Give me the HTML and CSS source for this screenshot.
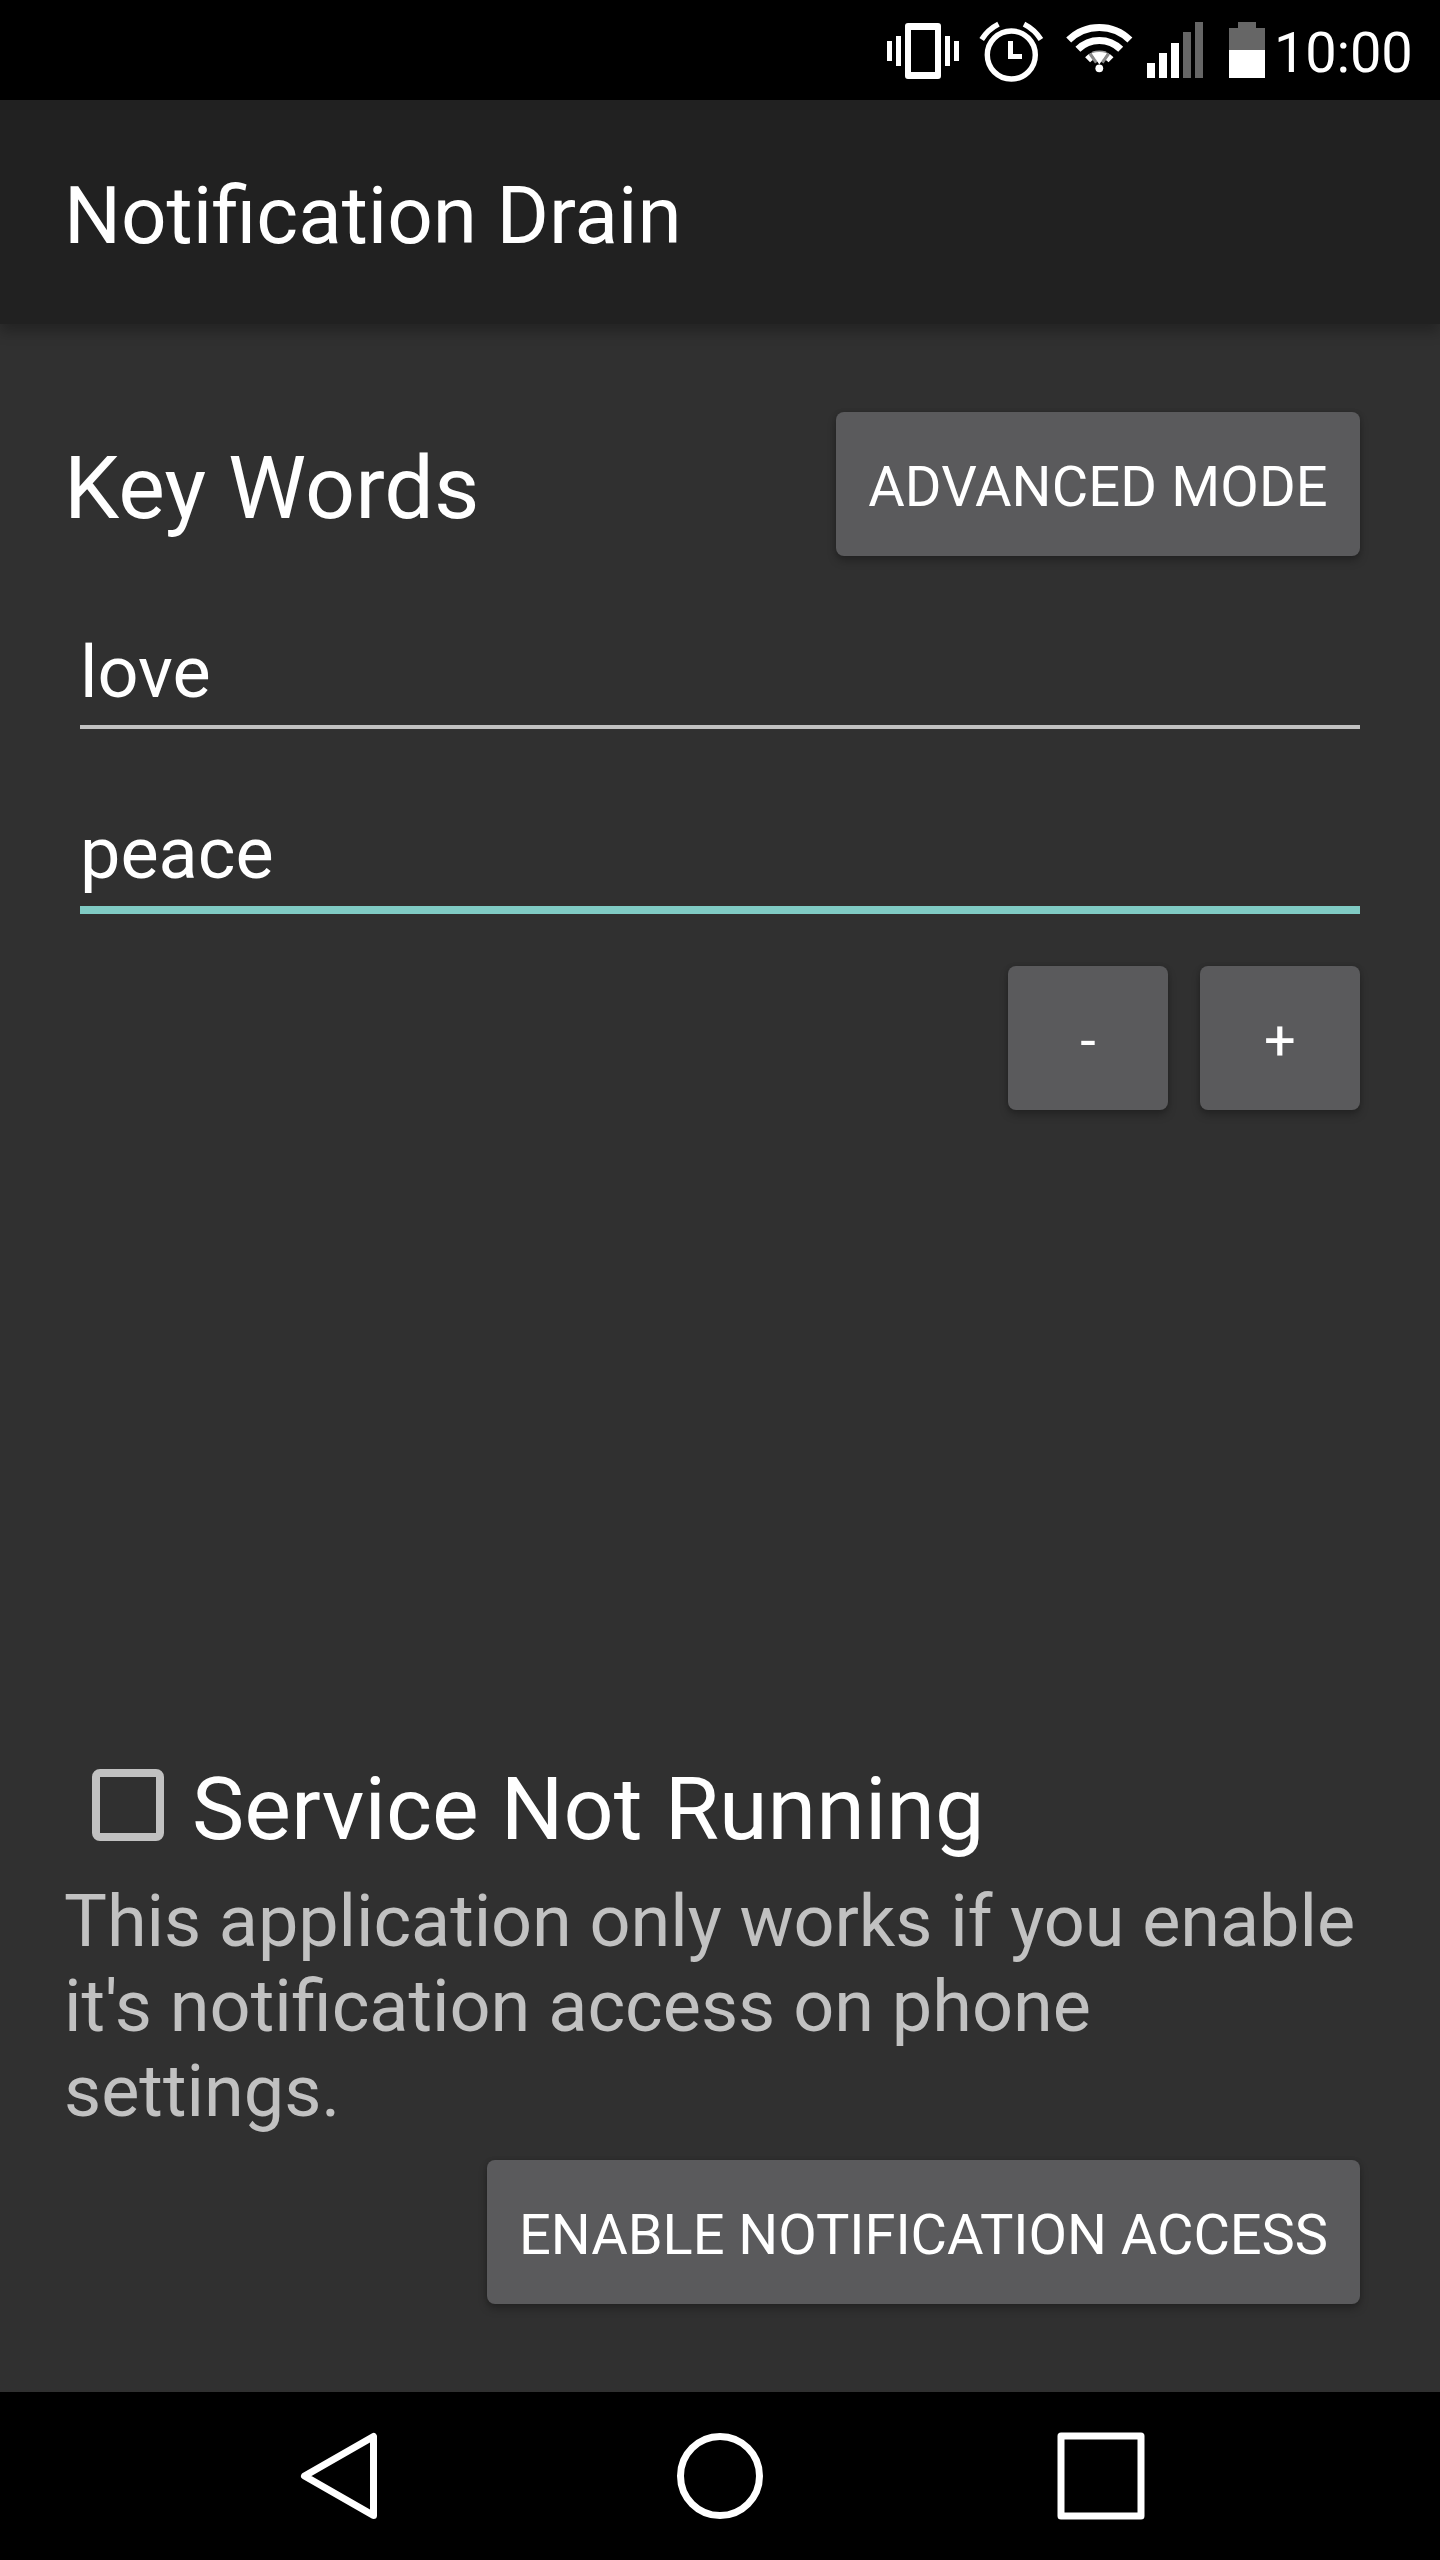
FILE: index.html
```html
<!DOCTYPE html>
<html lang="en">
<head>
<meta charset="utf-8">
<title>Notification Drain</title>
<link rel="stylesheet" href="styles.css">
</head>
<body>
<div class="screen">
  <div class="status">
    <svg class="status-icons" width="386" height="100" viewBox="884 0 386 100" fill="#fff">
      <!-- vibrate -->
      <path d="M887 41h5v20h-5zM896 36h5v30h-5zM945 36h5v30h-5zM954 41h5v20h-5z"/>
      <path fill-rule="evenodd" d="M908 23h30a3 3 0 0 1 3 3v50a3 3 0 0 1-3 3h-30a3 3 0 0 1-3-3v-50a3 3 0 0 1 3-3zM911 30v42h24v-42z"/>
      <!-- alarm -->
      <circle cx="1011.3" cy="55" r="24" fill="none" stroke="#fff" stroke-width="5.4"/>
      <path d="M1008 41h5v13h9v5h-14z"/>
      <path d="M981.700 39.500Q988 29.500 998.500 24.200M1024 24.200Q1034.500 29.500 1040.900 39.500" fill="none" stroke="#fff" stroke-width="5.400"/>
      <!-- wifi -->
      <g fill="none" stroke="#fff" stroke-width="7">
        <path d="M1068.700 40.100A43.300 43.300 0 0 1 1129.900 40.100"/>
        <path d="M1077.900 49.300A30.300 30.300 0 0 1 1120.700 49.300"/>
        <path d="M1087.600 59.700A16.500 16.500 0 0 1 1111 59.700"/>
      </g>
      <path d="M1090 53.500L1096.500 62.500M1108.600 53.500L1102.100 62.500" stroke="#888" stroke-width="3.500"/>
      <path d="M1092 53.500h14.600l-7.300 11z"/>
      <path d="M1092.500 52.200Q1099.300 50.200 1106.100 52.200" fill="none" stroke="#999" stroke-width="1.500"/>
      <circle cx="1099.300" cy="68.300" r="3.900"/>
      <!-- signal -->
      <path d="M1147 63h8v15h-8zM1159 53h8v25h-8zM1171 43h8v35h-8z"/>
      <path fill="#666" d="M1183 32h8v46h-8zM1195 22h8v56h-8z"/>
      <!-- battery -->
      <path fill="#666" d="M1238 22h18v6h9v22h-36v-22h9z"/>
      <path d="M1229 50h36v28h-36z"/>
    </svg>
    <span class="clock">10:00</span>
  </div>
  <header class="appbar"><h1 class="title">Notification Drain</h1></header>
  <main class="content">
    <div class="heading-row">
      <h2 class="heading">Key Words</h2>
      <button class="btn btn-mode">ADVANCED MODE</button>
    </div>
    <div class="field">love</div>
    <div class="field field-focused">peace</div>
    <div class="actions">
      <button class="btn btn-small">-</button>
      <button class="btn btn-small">+</button>
    </div>
    <section class="service">
      <div class="check-row"><span class="checkbox"></span><span class="check-label">Service Not Running</span></div>
      <p class="help"><span class="help-lead">This application only works if you enable</span> it's notification access on phone settings.</p>
      <div class="service-action"><button class="btn btn-access">ENABLE NOTIFICATION ACCESS</button></div>
    </section>
  </main>
  <nav class="navbar">
    <svg width="1440" height="168" viewBox="0 0 1440 168" fill="none" stroke="#fff" stroke-width="7" stroke-linejoin="round">
      <path d="M304.500 84L373.500 44.500V123.500Z"/>
      <circle cx="720" cy="84" r="39.500"/>
      <rect x="1061" y="44" width="80" height="80"/>
    </svg>
  </nav>
</div>
</body>
</html>
```
FILE: styles.css
```css
body {
  margin: 0;
  background: #303030;
  color: #fff;
  font-family: Roboto, sans-serif;
}
.screen {
  width: 1440px;
  height: 2560px;
  display: flex;
  flex-direction: column;
}
.status {
  height: 100px;
  display: flex;
  justify-content: flex-end;
  background: #000;
}
.status-icons { display: block; }
.clock {
  width: 138px;
  padding: 6px 28px 0 4px;
  font-size: 56px;
  line-height: 94px;
  letter-spacing: -.2px;
}
.appbar {
  height: 224px;
  box-sizing: border-box;
  padding: 8px 64px 0;
  background: #212121;
  box-shadow: 0 8px 12px rgba(0, 0, 0, .25);
}
.title {
  margin: 0;
  font-size: 80px;
  font-weight: 400;
  line-height: 216px;
  letter-spacing: -.06px;
  font-feature-settings: "liga" 1;
}
.content {
  flex: 1;
  display: flex;
  flex-direction: column;
  padding: 88px 80px 88px 64px;
}
.heading-row {
  display: flex;
  justify-content: space-between;
  height: 144px;
}
.heading {
  margin: 0;
  padding-top: 8px;
  font-size: 88px;
  font-weight: 400;
  line-height: 136px;
  letter-spacing: .1px;
}
.btn {
  box-sizing: border-box;
  height: 144px;
  border: 0;
  border-radius: 8px;
  padding: 6px 0 0;
  background: #5a5a5c;
  color: #fff;
  font: 400 56px/138px Roboto, sans-serif;
  text-align: center;
  white-space: nowrap;
  box-shadow: 0 5px 8px rgba(0, 0, 0, .25), 0 0 4px rgba(0, 0, 0, .15);
}
.btn-mode {
  width: 524px;
  letter-spacing: .15px;
}
.btn-access {
  width: 873px;
  letter-spacing: -.04px;
}
.btn-small { width: 160px; }
.field {
  height: 105px;
  margin: 64px 0 0 16px;
  border-bottom: 4px solid #c1c1c1;
  font-size: 72px;
  line-height: 105px;
}
.field-focused {
  margin-top: 72px;
  border-bottom: 8px solid #80cbc4;
}
.actions {
  display: flex;
  justify-content: flex-end;
  gap: 32px;
  margin-top: 52px;
}
.service { margin-top: auto; }
.check-row {
  display: flex;
  height: 72px;
  gap: 28px;
  padding-left: 28px;
}
.checkbox {
  box-sizing: border-box;
  width: 72px;
  height: 72px;
  border: 8px solid #c1c1c1;
  border-radius: 8px;
}
.check-label {
  font-size: 88px;
  line-height: 80px;
  letter-spacing: .08px;
}
.help {
  margin: 38px 0 26px;
  color: #c1c1c1;
  font-size: 72px;
  line-height: 85px;
}
.help-lead { letter-spacing: -.07px; }
.service-action {
  display: flex;
  justify-content: flex-end;
}
.navbar {
  height: 168px;
  background: #000;
}
.navbar svg { display: block; }
```
